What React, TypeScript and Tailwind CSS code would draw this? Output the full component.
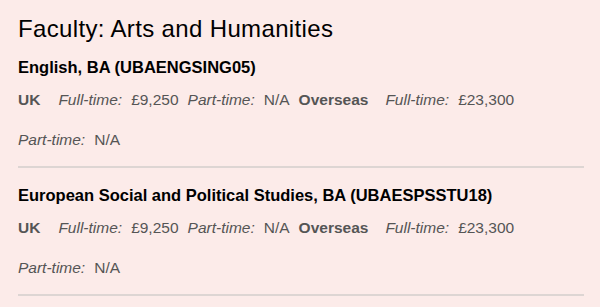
import React from "react";

const programs = [
  { title: "English, BA (UBAENGSING05)" },
  { title: "European Social and Political Studies, BA (UBAESPSSTU18)" },
];

function Pair({ label, value }: { label: string; value: string }) {
  return (
    <span className="flex gap-[9px] mr-[9px]">
      <span className="italic">{label}</span>
      <span>{value}</span>
    </span>
  );
}

function Fees() {
  return (
    <div className="flex flex-wrap gap-y-[20px] text-[15.5px] leading-[20px] text-[#555]">
      <span className="font-bold mr-[18px]">UK</span>
      <Pair label="Full-time:" value="£9,250" />
      <Pair label="Part-time:" value="N/A" />
      <span className="font-bold mr-[17px]">Overseas</span>
      <Pair label="Full-time:" value="£23,300" />
      <Pair label="Part-time:" value="N/A" />
    </div>
  );
}

export default function App() {
  return (
    <div
      className="w-[600px] h-[307px] bg-[#fcebe9] pl-[18px] pr-[16px] pt-[13px] overflow-hidden"
      style={{ fontFamily: '"Liberation Sans", Arial, sans-serif' }}
    >
      <h1 className="text-[24px] leading-[32px] tracking-[0.35px] text-black">Faculty: Arts and Humanities</h1>
      {programs.map((p, i) => (
        <div key={i} className={i === 0 ? "pt-[12px]" : "pt-[17px]"}>
          <h2 className="text-[16.5px] leading-[20px] font-bold text-black">{p.title}</h2>
          <div className="pt-[13px]">
            <Fees />
          </div>
          <div className="mt-[16px] h-[2px] bg-[#ddd5d3]" />
        </div>
      ))}
    </div>
  );
}
